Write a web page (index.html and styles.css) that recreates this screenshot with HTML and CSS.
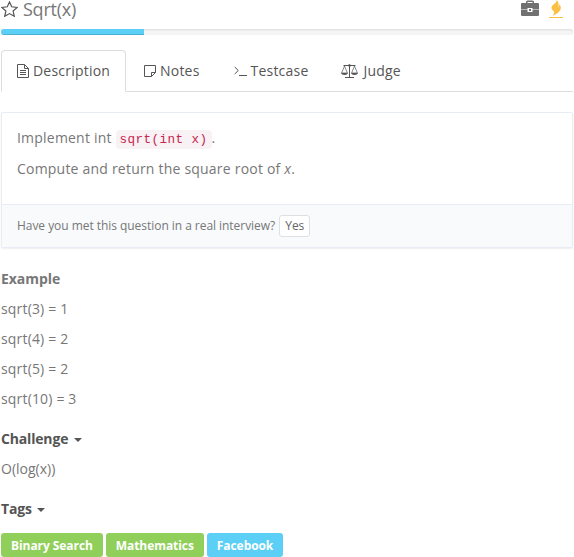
FILE: index.html
```html
<!DOCTYPE html>
<html lang="en">
<head>
<meta charset="utf-8">
<title>Sqrt(x)</title>
<link rel="stylesheet" href="styles.css">
</head>
<body>
<header class="title-row">
  <svg class="star" width="17" height="16" viewBox="0 0 17 16"><path d="M8.500 1l2.200 4.800 5.500.6-4.100 3.600 1.200 5.300-4.800-2.700-4.800 2.700 1.200-5.300L.8 6.400l5.500-.6z"/></svg>
  <h1>Sqrt(x)</h1>
  <div class="actions">
    <svg width="18" height="16" viewBox="0 0 18 16"><path fill="#707070" fill-rule="evenodd" d="M5 3V2Q5 .5 6.500.5h5Q13 .5 13 2v1h4Q18 3 18 4v5h-6.500V8h-5v1H0V4q0-1 1-1zm1.500 0h5V2h-5zM0 9.500h6.500V12h5V9.500H18V15q0 1-1 1H1q-1 0-1-1zM8 9h2v2H8z"/></svg>
    <svg width="14" height="18" viewBox="0 0 14 18"><path fill="#fbc043" d="M7.500 0C8.500 3.500 2 4.300 2.500 8.200c.3 2.100 2.700 2.600 2.600 4.400 0 1.200-.7 1.900-1 2.900 3.600-1.500 8.200-4.600 7.700-8.300-.2-1.500-1-2.100-1.400-3.200-.3 1.700-.3 2.700-1.300 3.500C10 5 9.900 1.500 7.500 0zM0 17h14v1H0z"/></svg>
  </div>
</header>
<div class="progress"><div class="bar"></div></div>
<nav class="tabs">
  <a class="tab active"><svg width="12" height="14" viewBox="0 0 12 14"><path d="M.5.5h7l4 4v9H.5zM7.500.5v4h4M3 6.500h6M3 8.500h6M3 10.500h6"/></svg>Description</a>
  <a class="tab notes"><svg width="12" height="12" viewBox="0 0 12 12"><path d="M.5.5h11v7l-4 4h-7zM11.500 7.500h-4v4"/></svg>Notes</a>
  <a class="tab testcase"><svg width="13" height="10" viewBox="0 0 13 10"><path d="M.7 1l3.600 3.500L.7 8M5 9.500h8"/></svg>Testcase</a>
  <a class="tab judge"><svg width="17" height="14" viewBox="0 0 17 14"><path d="M2.500 1.500h12M8.500 1v12M4 13.500h9"/><path class="thin" d="M3.500 2L.6 9h5.800zM13.500 2l-2.900 7h5.800z"/><path class="solid" d="M0 9h7q-.5 2-3.500 2T0 9zm10 0h7q-.5 2-3.500 2T10 9z"/><circle cx="8.500" cy="1.500" r="1"/></svg>Judge</a>
</nav>
<section class="panel">
  <div class="panel-body">
    <p>Implement int <code>sqrt(int x)</code>.</p>
    <p>Compute and return the square root of <em>x</em>.</p>
  </div>
  <div class="panel-footer">Have you met this question in a real interview? <button>Yes</button></div>
</section>
<section class="details">
  <p><b>Example</b></p>
  <p>sqrt(3) = 1</p>
  <p>sqrt(4) = 2</p>
  <p>sqrt(5) = 2</p>
  <p>sqrt(10) = 3</p>
  <p class="toggle">Challenge <i class="caret"></i></p>
  <p class="plain">O(log(x))</p>
  <p class="toggle">Tags <i class="caret"></i></p>
</section>
<div class="tags"><span>Binary Search</span><span>Mathematics</span><span class="company">Facebook</span></div>
</body>
</html>
```
FILE: styles.css
```css
* { box-sizing: border-box; }
html { overflow: hidden; }
body {
  margin: 0;
  padding: 0 1px;
  background: #fff;
  color: #777;
  font: 14px/20px "Open Sans", sans-serif;
  letter-spacing: .21px;
}
p { margin: 0; }
.title-row { display: flex; height: 29px; align-items: flex-start; }
.star { margin-top: 1px; fill: none; stroke: #555; stroke-width: 1.2; }
h1 { margin: 0 0 0 5px; font-size: 18px; line-height: 18px; font-weight: 400; letter-spacing: -.25px; }
.actions { display: flex; gap: 10px; margin: 0 10px 0 auto; }
.progress {
  height: 6px;
  overflow: hidden;
  border-radius: 3px;
  background: #f5f5f5;
  box-shadow: inset 0 1px 2px rgba(0, 0, 0, .1);
}
.bar { width: 25%; height: 6px; background: #5bcff5; box-shadow: inset 0 -1px 0 rgba(0, 0, 0, .15); }
.tabs { display: flex; height: 42px; margin-top: 15px; border-bottom: 1px solid #ddd; }
.tab {
  display: flex;
  align-items: center;
  height: 42px;
  padding: 0 15px;
  border: 1px solid transparent;
  border-radius: 4px 4px 0 0;
  color: #555;
}
.tab.active { width: 125px; border-color: #ddd; border-bottom-color: #fff; background: #fff; }
.tab svg { flex: none; margin-right: 4px; fill: none; stroke: #555; stroke-width: 1; }
.tab .solid { fill: #555; stroke: none; }
.tab .thin { stroke-width: .7; }
.notes { margin-left: 2px; }
.testcase { margin-left: 2px; }
.judge { margin-left: 1px; }
.judge svg { margin-right: 5px; }
.panel {
  height: 136px;
  margin-top: 20px;
  border: 1px solid #e8edf5;
  border-radius: 2px;
  box-shadow: 0 1px 2px rgba(0, 0, 0, .07);
}
.panel-body { height: 91px; padding: 15px; }
.panel-body p { margin-bottom: 10px; }
code {
  padding: 3px 4px 2px;
  border-radius: 4px;
  background: #f9f2f4;
  color: #c7254e;
  font: 12.6px/18px "Liberation Mono", monospace;
  letter-spacing: .44px;
}
.panel-footer {
  display: flex;
  align-items: center;
  height: 43px;
  padding: 0 15px;
  border-top: 1px solid #e8edf5;
  background: #f8fafc;
  font-size: 12px;
  letter-spacing: -.045px;
}
button {
  height: 22px;
  margin-left: 4px;
  padding: 0 5px;
  border: 1px solid #dce1e6;
  border-radius: 3px;
  background: #fff;
  color: #666;
  font: 12px/20px "Open Sans", sans-serif;
}
.details { padding-top: 21px; }
.details p { margin-bottom: 10px; letter-spacing: .17px; }
.details b { letter-spacing: -.05px; }
.details .plain { letter-spacing: 0; }
.details .toggle { margin-top: 20px; color: #555; font-weight: 700; letter-spacing: -.17px; }
.caret {
  display: inline-block;
  margin-left: 2px;
  border: 4px solid transparent;
  border-top-color: #555;
  border-bottom: 0;
  vertical-align: middle;
}
.tags { display: flex; gap: 3px; margin-top: 14px; letter-spacing: -.07px; }
.tags span {
  height: 24px;
  padding: 0 10px;
  border-radius: 3px;
  background: #91cf5b;
  color: #fff;
  font-size: 12px;
  font-weight: 700;
  line-height: 25px;
}
.tags .company { background: #5bcff5; }
```
